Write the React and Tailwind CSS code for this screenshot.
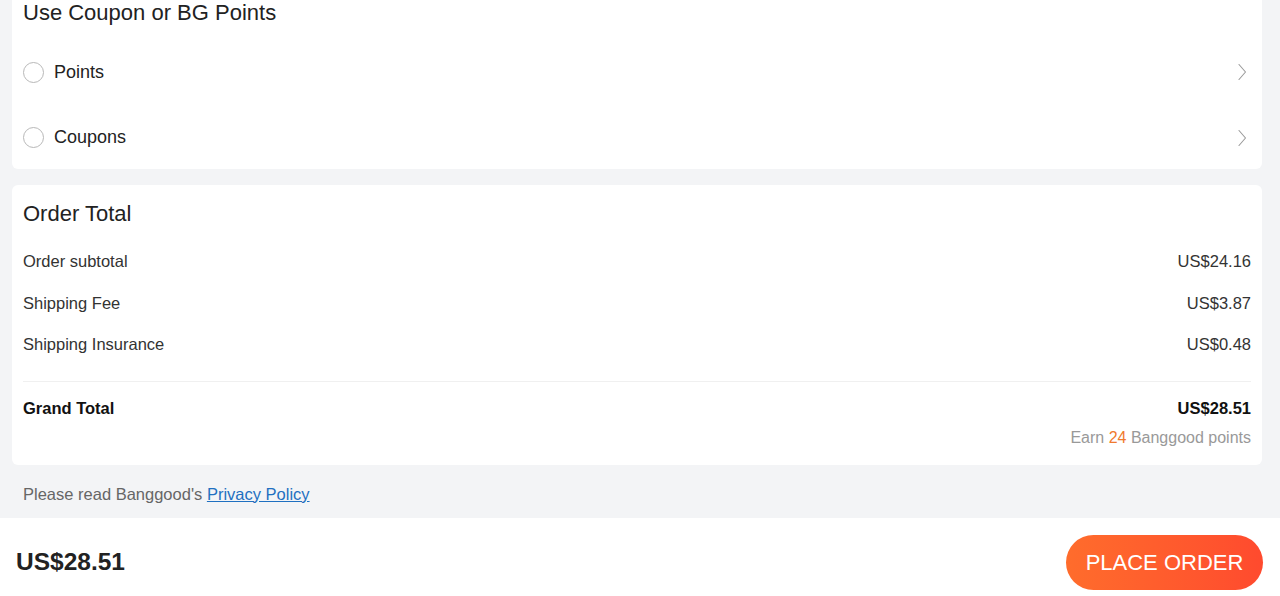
const Chevron = () => (
  <svg width="10" height="18" viewBox="0 0 10 18" fill="none" className="text-[#9a9a9a]">
    <path d="M2 1.5 L8.5 9 L2 16.5" stroke="currentColor" strokeWidth="1.1" strokeLinecap="round" strokeLinejoin="round" />
  </svg>
);

const RadioRow = ({ label, className }) => (
  <div className={`flex items-center justify-between ${className}`}>
    <div className="flex items-center gap-[10px]">
      <span className="w-[21px] h-[21px] rounded-full border border-[#b8b8b8] bg-white" />
      <span className="text-[18px] text-[#222]">{label}</span>
    </div>
    <div className="pr-[4px]">
      <Chevron />
    </div>
  </div>
);

const Line = ({ label, value }) => (
  <div className="flex items-center justify-between h-[41.5px] text-[16.5px] text-[#333]">
    <span>{label}</span>
    <span>{value}</span>
  </div>
);

export default function App() {
  return (
    <div className="w-[1280px] h-[596px] overflow-hidden bg-[#f3f4f6] flex flex-col font-['Liberation_Sans',Arial,sans-serif]">
      <div className="flex-1 pl-3 pr-[18px]">
        {/* Coupons / points */}
        <div className="bg-white rounded-b-md px-[11px]">
          <h2 className="h-[26px] leading-[26px] text-[22px] text-[#222]">Use Coupon or BG Points</h2>
          <RadioRow label="Points" className="h-[66px] mt-[13px]" />
          <RadioRow label="Coupons" className="h-[64px] pt-[1px]" />
        </div>

        {/* Order total */}
        <div className="bg-white rounded-md mt-4 px-[11px] pt-[16px] pb-[17px]">
          <h2 className="h-[26px] leading-[26px] text-[22px] text-[#222]">Order Total</h2>
          <div className="mt-[14px]">
            <Line label="Order subtotal" value="US$24.16" />
            <Line label="Shipping Fee" value="US$3.87" />
            <Line label="Shipping Insurance" value="US$0.48" />
          </div>
          <div className="mt-[15px] border-t border-[#f0f0f0]" />
          <div className="flex items-center justify-between pt-4 leading-5 text-[16.5px] font-bold text-[#111]">
            <span>Grand Total</span>
            <span>US$28.51</span>
          </div>
          <div className="mt-[10px] text-right leading-5 text-[16px] text-[#999]">
            Earn <span className="text-[#f07a2e]">24</span> Banggood points
          </div>
        </div>

        <p className="px-[11px] pt-[19px] pb-[14px] leading-5 text-[16.5px] text-[#666]">
          Please read Banggood's{' '}
          <a href="#" className="text-[#1f70c1] underline">Privacy Policy</a>
        </p>
      </div>

      {/* Bottom bar */}
      <div className="h-[78px] bg-white flex items-center justify-between pl-4 pr-[17px] pt-[10px]">
        <span className="text-[24.5px] font-bold text-[#222]">US$28.51</span>
        <button className="h-[55px] w-[197px] rounded-full bg-gradient-to-r from-[#ff6c2c] to-[#ff4a2e] text-white text-[22px]">
          PLACE ORDER
        </button>
      </div>
    </div>
  );
}
